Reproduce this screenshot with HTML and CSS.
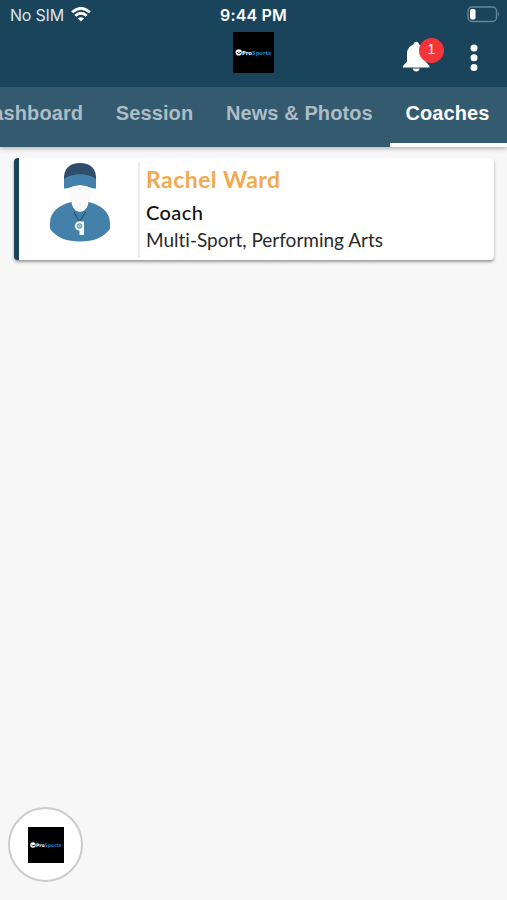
FILE: index.html
```html
<!DOCTYPE html>
<html lang="en">
<head>
<meta charset="utf-8">
<title>Coaches</title>
<link rel="stylesheet" href="styles.css">
</head>
<body>
<header class="header">
  <div class="status">
    <div class="carrier"><span>No SIM</span>
      <svg width="20" height="15" viewBox="0 0 20 15" fill="none" stroke="#fff" stroke-width="2.8"><path d="M1.1 5.3Q10-2.7 18.9 5.3M4.3 8.8Q10 3.8 15.7 8.8"/><path d="M6.9 11.5Q10 8.8 13.1 11.5L10 14.6Z" fill="#fff" stroke="none"/></svg>
    </div>
    <div class="time">9:44 PM</div>
    <svg class="battery" width="33" height="17" viewBox="0 0 33 17"><rect x="1" y="1" width="28.5" height="14.5" rx="4" fill="none" stroke="#668595" stroke-width="1.4"/><rect x="3" y="3" width="5.5" height="10.5" rx="1.8" fill="#fff"/><path d="M31 6q2 2.2 0 4.5z" fill="#668595"/></svg>
  </div>
  <div class="appbar">
    <svg class="logo" width="41" height="41" viewBox="0 0 41 41"><rect width="41" height="41" rx="1" fill="#000"/><circle cx="5.7" cy="20.4" r="3.1" fill="#fff"/><path d="M4 20.2l1.4 1.2 2.7-.8" fill="none" stroke="#000"/><text class="logo-text" x="9" y="22.5" textLength="29" lengthAdjust="spacingAndGlyphs" fill="#fff">Pro<tspan fill="#1b83ca">Sports</tspan></text></svg>
    <div class="actions">
      <div class="bell">
        <svg width="27" height="32" viewBox="0 0 27 32" fill="#fff"><path d="M10.5 3.5C10.5-.2 16-.2 16 3.5C20.2 5 22.5 8.5 22.5 13V20.5L26.5 25V26.5H0V25L4 20.5V13C4 8.5 6.3 5 10.5 3.5Z"/><path d="M9.7 27.5h7c-.6 4-6.4 4-7 0z"/></svg>
        <span class="badge">1</span>
      </div>
      <svg width="8" height="28" viewBox="0 0 8 28" fill="#fff"><circle cx="4" cy="4" r="3.5"/><circle cx="4" cy="13.8" r="3.5"/><circle cx="4" cy="23.6" r="3.5"/></svg>
    </div>
  </div>
  <nav class="tabs">
    <a class="tab">Dashboard</a><a class="tab">Session</a><a class="tab">News &amp; Photos</a><a class="tab active">Coaches</a>
  </nav>
</header>
<main class="content">
  <article class="card">
    <div class="avatar">
      <svg width="62" height="79" viewBox="0 0 62 79"><path d="M15 18C14 5 21 0 31 0S48 5 47 18Z" fill="#304e6b"/><path d="M15 16C22 9.5 40 9.5 47 16V25.5Q44 26 40 24Q31 20.5 22 24Q18 26 15 25.5Z" fill="#4381ab"/><path d="M22.5 39C24 52 38 52 39.5 39C52 42 61 49 61 60V66C54 75 44 78.5 31 78.5S8 75 1 66V60C1 49 10 42 22.5 39Z" fill="#4381ab"/><path d="M18 26Q31 19 44 26Q43 36 39 39.5C38 51 24 51 23 39.500Q19 36 18 26Z" fill="#fafafa"/><path d="M25 49L30.500 59L36.500 49" fill="none" stroke="#304e6b" stroke-width="1.3"/><circle cx="30.500" cy="63" r="4.700" fill="#f4fafc"/><path d="M30 58.500h5V72h-4.500v-7z" fill="#f4fafc"/><circle cx="30.500" cy="63" r="2.300" fill="#9ebfd0" stroke="#6998b6"/></svg>
    </div>
    <div class="info">
      <h2 class="name">Rachel Ward</h2>
      <p class="role">Coach</p>
      <p class="skills">Multi-Sport, Performing Arts</p>
    </div>
  </article>
</main>
<button class="fab" aria-label="ProSports">
  <svg width="36" height="36" viewBox="0 0 41 41"><rect width="41" height="41" fill="#000"/><circle cx="5.7" cy="20.4" r="3.1" fill="#fff"/><path d="M4 20.2l1.4 1.2 2.7-.8" fill="none" stroke="#000"/><text class="logo-text" x="9" y="22.5" textLength="29" lengthAdjust="spacingAndGlyphs" fill="#fff">Pro<tspan fill="#1b83ca">Sports</tspan></text></svg>
</button>
</body>
</html>
```
FILE: styles.css
```css
* { box-sizing: border-box; }
body {
  margin: 0;
  height: 900px;
  overflow: hidden;
  display: flex;
  flex-direction: column;
  background: #f7f7f7;
  font-family: Lato, sans-serif;
}
.header {
  background: #1a445c;
  box-shadow: 0 1px 5px rgba(0, 0, 0, .35);
}
.status {
  height: 30px;
  display: grid;
  grid-template-columns: 1fr auto 1fr;
  align-items: center;
  padding: 0 7px 0 10px;
  color: #fff;
  font-family: Inter, sans-serif;
}
.carrier {
  display: flex;
  align-items: center;
  gap: 7px;
  font-size: 16px;
  letter-spacing: -.2px;
  color: #dce4e8;
}
.carrier svg { margin-top: -1px; }
.time { font-size: 16px; font-weight: 600; letter-spacing: .15px; margin-right: 3px; }
.battery { justify-self: end; margin-top: -1px; }
.appbar {
  height: 57px;
  display: grid;
  grid-template-columns: 1fr 41px 1fr;
}
.logo { grid-column: 2; margin-top: 2px; }
.logo-text { font: 700 5.5px "DejaVu Sans", sans-serif; }
.actions {
  display: flex;
  justify-content: flex-end;
  align-items: flex-start;
  gap: 40px;
  padding: 11px 29px 0 0;
}
.actions > svg { margin-top: 3px; }
.bell { position: relative; width: 27px; height: 32px; }
.badge {
  position: absolute;
  left: 16px;
  top: -3px;
  width: 25px;
  height: 25px;
  border-radius: 50%;
  background: #f23539;
  color: #fff;
  font: 14px/23px "Liberation Sans", sans-serif;
  text-align: center;
}
.tabs {
  height: 60px;
  display: flex;
  justify-content: flex-end;
  overflow: hidden;
  background: #345a6f;
}
.tab {
  flex: none;
  padding: 0 16.7px 0 16px;
  font: bold 20px/52px "Liberation Sans", sans-serif;
  letter-spacing: .1px;
  color: #adbdc7;
  white-space: nowrap;
}
.active { width: 117.5px; color: #fff; border-bottom: 4px solid #fff; }
.content { padding: 11px 13px 0 14px; }
.card {
  height: 102px;
  display: flex;
  padding: 4px 0 3px;
  background: #fff;
  border-left: 5px solid #1a445c;
  border-radius: 4px;
  box-shadow: 0 2px 3px rgba(0, 0, 0, .38);
}
.avatar {
  width: 121px;
  padding: 1px 0 0 30px;
  border-right: 2px solid #ececec;
}
.info { padding-left: 6px; font-variant-ligatures: none; }
.name, .role, .skills { margin: 0; white-space: nowrap; }
.name { font-size: 23px; line-height: 34px; font-weight: 700; letter-spacing: .45px; color: #f1aa4d; }
.role { font-size: 20px; line-height: 32px; font-weight: 500; letter-spacing: .4px; color: #111; }
.skills { font-size: 19px; line-height: 23px; color: #292929; }
.fab {
  position: absolute;
  left: 8px;
  top: 807px;
  width: 75px;
  height: 75px;
  padding: 0;
  display: flex;
  align-items: center;
  justify-content: center;
  border: 2px solid #ccc;
  border-radius: 50%;
  background: #fff;
}
```
